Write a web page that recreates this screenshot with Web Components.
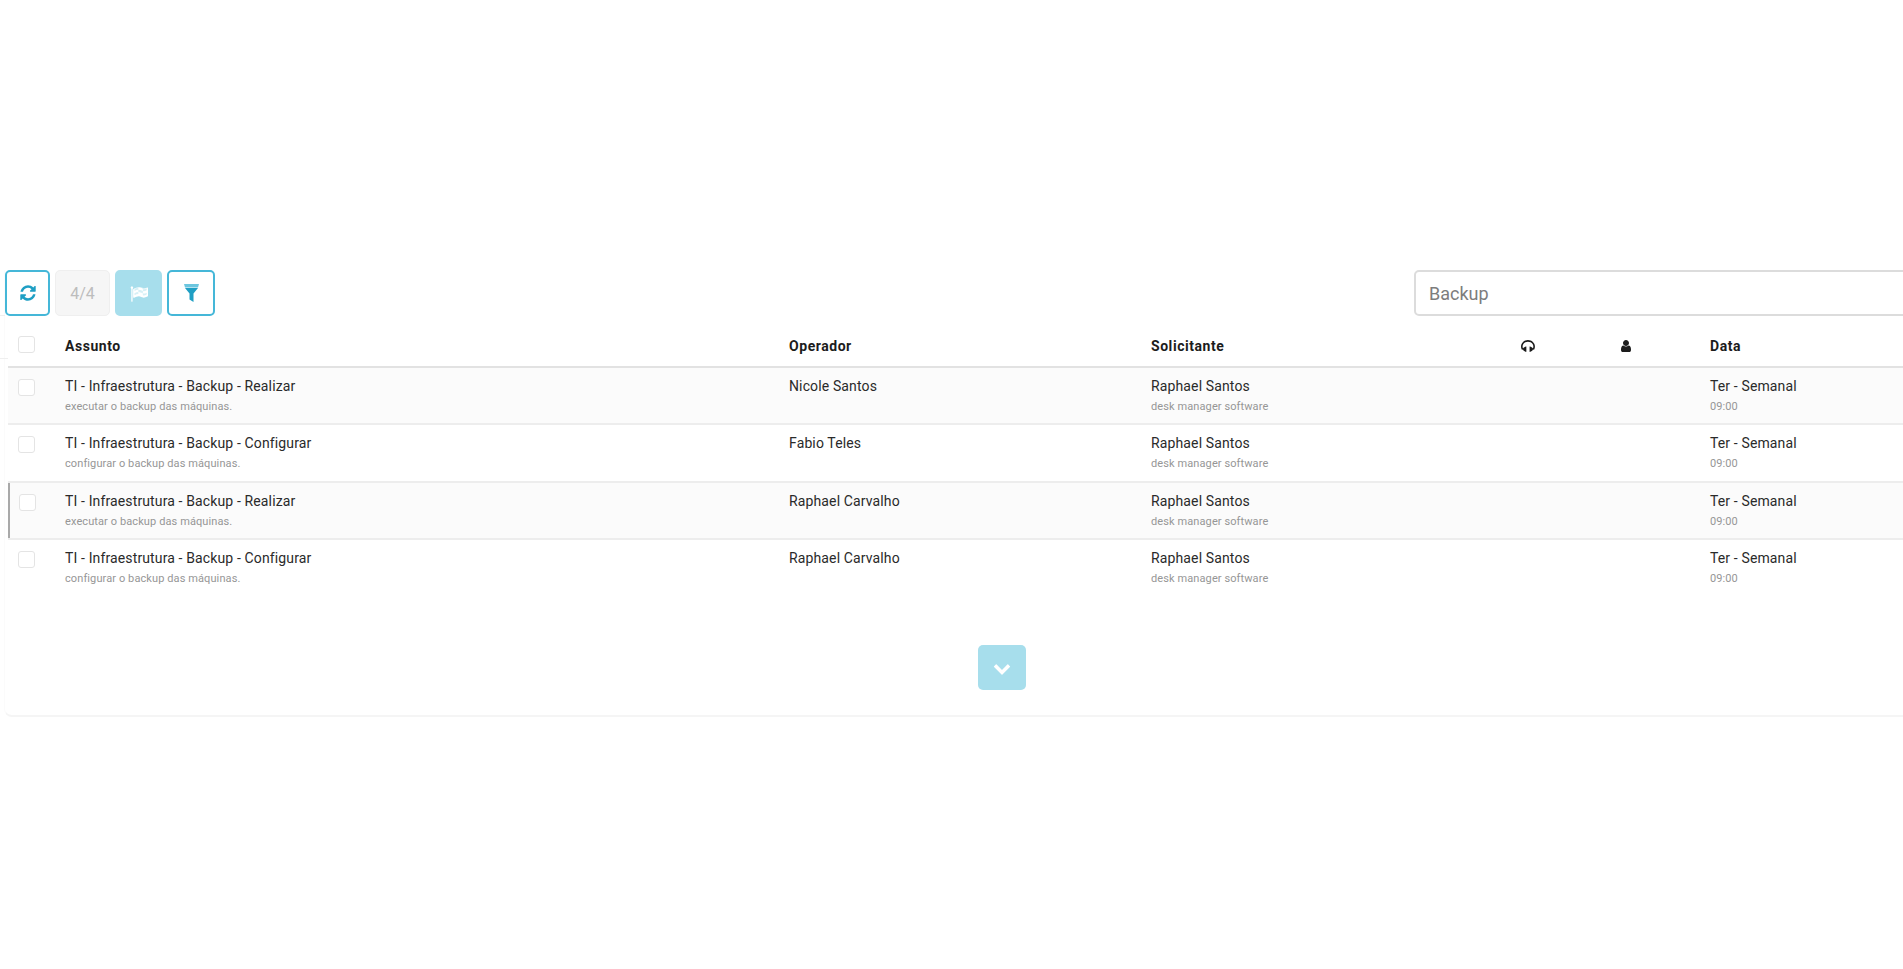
<!DOCTYPE html>
<html lang="pt-BR">
<head>
<meta charset="utf-8">
<title>Tickets</title>
<style>
    html, body { margin: 0; height: 100%; overflow: hidden; background: #fff; }
    body { font-family: Roboto, "Liberation Sans", sans-serif; color: #222; }
</style>
</head>
<body>
<ticket-panel>
    <ticket-toolbar slot="toolbar" search="Backup"></ticket-toolbar>
    <ticket-head slot="head"></ticket-head>
    <ticket-row striped>
        <span slot="title">TI - Infraestrutura - Backup - Realizar</span>
        <span slot="desc">executar o backup das máquinas.</span>
        <span slot="operator">Nicole Santos</span>
        <span slot="requester">Raphael Santos</span>
        <span slot="company">desk manager software</span>
        <span slot="date">Ter - Semanal</span>
        <span slot="time">09:00</span>
    </ticket-row>
    <ticket-row>
        <span slot="title">TI - Infraestrutura - Backup - Configurar</span>
        <span slot="desc">configurar o backup das máquinas.</span>
        <span slot="operator">Fabio Teles</span>
        <span slot="requester">Raphael Santos</span>
        <span slot="company">desk manager software</span>
        <span slot="date">Ter - Semanal</span>
        <span slot="time">09:00</span>
    </ticket-row>
    <ticket-row striped marked>
        <span slot="title">TI - Infraestrutura - Backup - Realizar</span>
        <span slot="desc">executar o backup das máquinas.</span>
        <span slot="operator">Raphael Carvalho</span>
        <span slot="requester">Raphael Santos</span>
        <span slot="company">desk manager software</span>
        <span slot="date">Ter - Semanal</span>
        <span slot="time">09:00</span>
    </ticket-row>
    <ticket-row last>
        <span slot="title">TI - Infraestrutura - Backup - Configurar</span>
        <span slot="desc">configurar o backup das máquinas.</span>
        <span slot="operator">Raphael Carvalho</span>
        <span slot="requester">Raphael Santos</span>
        <span slot="company">desk manager software</span>
        <span slot="date">Ter - Semanal</span>
        <span slot="time">09:00</span>
    </ticket-row>
</ticket-panel>

<script>
const ICONS = {
    refresh: '<path d="M1639 1056q0 5-1 7-64 268-268 434.5t-478 166.5q-146 0-282.5-55t-243.5-157l-129 129q-19 19-45 19t-45-19-19-45v-448q0-26 19-45t45-19h448q26 0 45 19t19 45-19 45l-137 137q71 66 161 102t187 36q134 0 250-65t186-179q11-17 53-117 8-23 30-23h192q13 0 22.5 9.5t9.5 22.5zm25-800v448q0 26-19 45t-45 19h-448q-26 0-45-19t-19-45 19-45l138-138q-148-137-349-137-134 0-250 65t-186 179q-11 17-53 117-8 23-30 23h-199q-13 0-22.5-9.5t-9.5-22.5v-7q65-268 270-434.5t480-166.5q146 0 284 55.5t245 156.5l130-129q19-19 45-19t45 19 19 45z"/>',
    // the pale wave behind fills the checks, they hardly show at this size in the app
    flag: '<path opacity=".55" d="M320 500Q900 150 1250 380 1500 480 1792 320V1080Q1400 1300 1150 1180 800 1000 320 1260Z"/><path d="M832 1000v-192q-181 16-384 117v185q205-96 384-110zm0-418v-197q-172 8-384 126v189q215-111 384-118zm832 463v-184q-235 116-384 71v-224q-20-6-39-15-5-3-33-17t-34.5-17-31.5-15-34.5-15.5-32.5-13-36-12.5-35-8.5-39.5-7.5-39.5-4-44-2q-23 0-49 3v222h19q102 0 192.5 29t197.5 82q19 9 39 15v188q42 17 91 17 120 0 293-92zm0-427v-189q-169 91-306 91-45 0-78-8v196q148 42 384-90zm-1344-266q0 35-17.5 64t-46.5 46v1266q0 14-9 23t-23 9h-64q-14 0-23-9t-9-23v-1266q-29-17-46.5-46t-17.5-64q0-53 37.5-90.5t90.5-37.5 90.5 37.5 37.5 90.5zm1472 64v763q0 39-35 57-10 5-17 9-218 116-369 116-88 0-158-35l-28-14q-64-33-99-48t-91-29-114-14q-102 0-235.5 44t-228.5 102q-15 9-33 9-16 0-32-8-32-19-32-56v-742q0-35 31-55 35-21 78.5-42.5t114-52 152.5-49.5 155-19q112 0 209 31t209 86q38 19 89 19 122 0 310-112 22-12 31-12 26 0 45 18.5t19 45.5z"/>',
    headphones: '<path d="M1664 890q0 166-60 314l-20 49-185 33q-22 83-90.5 136.5t-156.5 53.5v32q0 14-9 23t-23 9h-64q-14 0-23-9t-9-23v-576q0-14 9-23t23-9h64q14 0 23 9t9 23v32q71 0 130 35.5t93 95.5l68-12q29-95 29-193 0-148-88-279t-236.5-209-315.5-78-315.5 78-236.5 209-88 279q0 98 29 193l68 12q34-60 93-95.5t130-35.5v-32q0-14 9-23t23-9h64q14 0 23 9t9 23v576q0 14-9 23t-23 9h-64q-14 0-23-9t-9-23v-32q-88 0-156.5-53.5t-90.5-136.5l-185-33-20-49q-60-148-60-314 0-151 67-291t179-242.5 266-163.5 320-61 320 61 266 163.5 179 242.5 67 291z"/>',
    user: '<path d="M1536 1399q0 109-62.5 187t-150.5 78h-854q-88 0-150.5-78t-62.5-187q0-85 8.5-160.5t31.5-152 58.5-131 94-89 134.5-34.5q131 128 313 128t313-128q76 0 134.5 34.5t94 89 58.5 131 31.5 152 8.5 160.5zm-256-887q0 159-112.5 271.5t-271.5 112.5-271.5-112.5-112.5-271.5 112.5-271.5 271.5-112.5 271.5 112.5 112.5 271.5z"/>',
    chevron: '<path d="M1683 808l-742 741q-19 19-45 19t-45-19l-742-741q-19-19-19-45.5t19-45.5l166-165q19-19 45-19t45 19l531 531 531-531q19-19 45-19t45 19l166 165q19 19 19 45.5t-19 45.5z"/>'
};

function icon(name, size) {
    return `<svg viewBox="0 0 1792 1792" width="${size}" height="${size}" fill="currentColor" aria-hidden="true">${ICONS[name]}</svg>`;
}

// funnel with the paler rim on top, narrower than the stock filter glyph
const FUNNEL = `<svg viewBox="0 0 15 18" width="15" height="18" aria-hidden="true">
    <path d="M0 0h15l-1 3.5H1z" fill="#6cc6df"/>
    <path d="M1 4h13L9.5 9.5V18L5.5 15.5V9.5z" fill="#1f9fc4"/>
</svg>`;

// shared column widths, the panel is wider than the window on purpose
const COLUMNS = '57px 724px 362px 370px 98px 91px 1fr';

class TicketCheck extends HTMLElement {
    connectedCallback() {
        this.attachShadow({ mode: 'open' });
        this.shadowRoot.innerHTML = `
            <style>
                :host {
                    display: block;
                    width: 17px;
                    height: 17px;
                    box-sizing: border-box;
                    border: 1.5px solid #e4e4e4;
                    border-radius: 3px;
                    background: #fff;
                }
            </style>
        `;
    }
}

class ToolButton extends HTMLElement {
    connectedCallback() {
        this.attachShadow({ mode: 'open' });
        this.shadowRoot.innerHTML = `
            <style>
                :host {
                    display: flex;
                    align-items: center;
                    justify-content: center;
                    box-sizing: border-box;
                    height: 46px;
                    border: 2px solid #45b7d8;
                    border-radius: 5px;
                    background: #fff;
                    color: #1f9fc4;
                    font-size: 16px;
                }
                :host([kind="count"]) {
                    border: 1px solid #efefef;
                    background: #f6f6f6;
                    color: #bdbdbd;
                }
                :host([kind="solid"]) {
                    border-color: #a7deec;
                    background: #a7deec;
                    color: #fff;
                }
            </style>
            <slot></slot>
        `;
    }
}

class TicketToolbar extends HTMLElement {
    connectedCallback() {
        this.attachShadow({ mode: 'open' });
        this.shadowRoot.innerHTML = `
            <style>
                :host {
                    display: flex;
                    align-items: center;
                    justify-content: space-between;
                }
                .tools {
                    display: flex;
                    gap: 5px;
                }
                .search {
                    box-sizing: border-box;
                    width: 551px;
                    height: 46px;
                    padding: 0 13px;
                    display: flex;
                    align-items: center;
                    border: 2px solid #dcdcdc;
                    border-radius: 5px;
                    font-size: 18px;
                    color: #7d7d7d;
                }
            </style>
            <div class="tools">
                <tool-button style="width:45px">${icon('refresh', 18)}</tool-button>
                <tool-button kind="count" style="width:55px">4/4</tool-button>
                <tool-button kind="solid" style="width:47px">${icon('flag', 18)}</tool-button>
                <tool-button style="width:48px">${FUNNEL}</tool-button>
            </div>
            <div class="search">${this.getAttribute('search')}</div>
        `;
    }
}

class TicketHead extends HTMLElement {
    connectedCallback() {
        this.attachShadow({ mode: 'open' });
        this.shadowRoot.innerHTML = `
            <style>
                :host {
                    display: grid;
                    grid-template-columns: ${COLUMNS};
                    align-items: center;
                    height: 40px;
                    margin-left: 3px;
                    padding-top: 10px;
                    border-bottom: 2px solid #e2e2e2;
                    font-size: 14px;
                    font-weight: 700;
                    color: #1c1c1c;
                    letter-spacing: 0.55px;
                }
                ticket-check { margin: -3px 0 0 10px; }
                svg { display: block; }
            </style>
            <ticket-check></ticket-check>
            <span>Assunto</span>
            <span>Operador</span>
            <span>Solicitante</span>
            <div>${icon('headphones', 15)}</div>
            <div>${icon('user', 14)}</div>
            <span>Data</span>
        `;
    }
}

class TicketRow extends HTMLElement {
    connectedCallback() {
        this.attachShadow({ mode: 'open' });
        this.shadowRoot.innerHTML = `
            <style>
                :host {
                    display: grid;
                    grid-template-columns: ${COLUMNS};
                    align-items: start;
                    box-sizing: border-box;
                    height: 57.3px;
                    margin-left: 3px;
                    padding-top: 10px;
                    border-bottom: 2px solid #ededed;
                    font-size: 14px;
                    color: #2a2a2a;
                    letter-spacing: 0.13px;
                }
                :host([striped]) { background: #fbfbfb; }
                :host([marked]) { box-shadow: inset 2px 0 0 #a9a9a9; }
                :host([last]) { border-bottom-color: transparent; }
                ticket-check { margin: 1px 0 0 10px; }
                :host([marked]) ticket-check { margin-left: 11px; }
                .main { display: block; line-height: 16px; }
                .sub {
                    display: block;
                    margin-top: 6px;
                    line-height: 14px;
                    font-size: 11px;
                    color: #969696;
                    letter-spacing: 0.1px;
                }
            </style>
            <ticket-check></ticket-check>
            <div>
                <span class="main"><slot name="title"></slot></span>
                <span class="sub"><slot name="desc"></slot></span>
            </div>
            <div><span class="main"><slot name="operator"></slot></span></div>
            <div style="grid-column: span 3">
                <span class="main"><slot name="requester"></slot></span>
                <span class="sub"><slot name="company"></slot></span>
            </div>
            <div>
                <span class="main"><slot name="date"></slot></span>
                <span class="sub"><slot name="time"></slot></span>
            </div>
        `;
    }
}

class TicketPanel extends HTMLElement {
    connectedCallback() {
        this.attachShadow({ mode: 'open' });
        this.shadowRoot.innerHTML = `
            <style>
                :host {
                    display: block;
                    position: relative;
                    box-sizing: border-box;
                    width: 1961px;
                    height: 447px;
                    margin: 270px 0 0 4px;
                    border-left: 1px solid #fbfbfb;
                    border-bottom: 2px solid #f5f5f5;
                    border-radius: 0 0 0 8px;
                }
                .tick {
                    position: absolute;
                    left: -5px;
                    width: 5px;
                    height: 1px;
                    background: #efefef;
                }
                .more {
                    display: flex;
                    justify-content: center;
                    width: 1993px;
                    margin-top: 48px;
                }
                .more-btn {
                    display: flex;
                    align-items: center;
                    justify-content: center;
                    width: 48px;
                    height: 45px;
                    border-radius: 5px;
                    background: #a7deec;
                    color: #fff;
                }
            </style>
            <div class="tick" style="top:45px"></div>
            <div class="tick" style="top:88px;width:8px"></div>
            <slot name="toolbar"></slot>
            <slot name="head"></slot>
            <slot></slot>
            <div class="more"><div class="more-btn">${icon('chevron', 18)}</div></div>
        `;
    }
}

customElements.define('ticket-check', TicketCheck);
customElements.define('tool-button', ToolButton);
customElements.define('ticket-toolbar', TicketToolbar);
customElements.define('ticket-head', TicketHead);
customElements.define('ticket-row', TicketRow);
customElements.define('ticket-panel', TicketPanel);
</script>
</body>
</html>
